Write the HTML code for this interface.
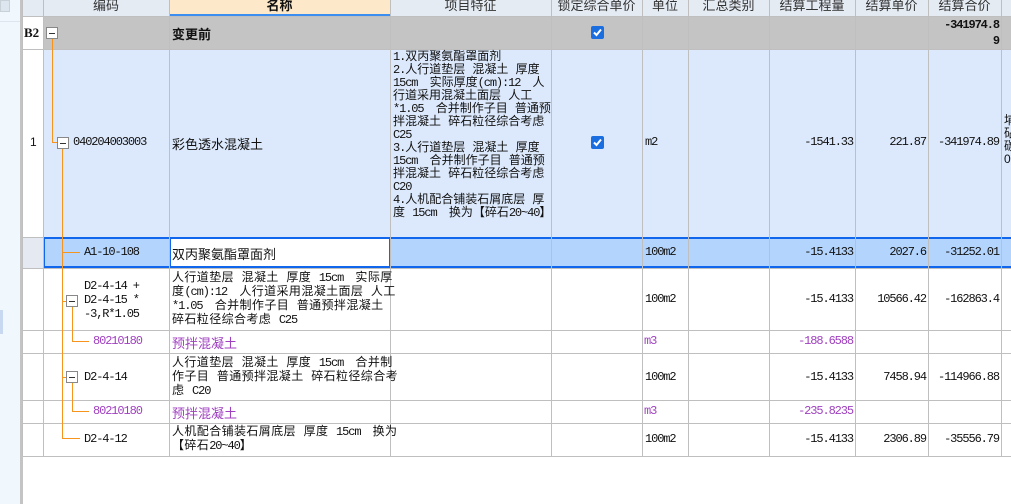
<!DOCTYPE html><html><head><meta charset="utf-8"><style>
body{margin:0;width:1011px;height:504px;overflow:hidden;background:#fff;position:relative;font-family:"Liberation Sans","Noto Sans CJK SC",sans-serif;font-size:12px;color:#111}
div{position:absolute;box-sizing:border-box}
.m{font-family:"Liberation Mono","Noto Sans CJK SC",monospace;font-size:12px;letter-spacing:-1.1px}
.t{white-space:nowrap}
.pre{white-space:pre;font-family:"Liberation Mono","Noto Sans CJK SC",monospace;font-size:12px;letter-spacing:0.4px}
.pre i{font-style:normal;letter-spacing:-1.1px}
.vl{width:1px;background:#bfbfbf}
.hl{height:1px;background:#bfbfbf}
.o{background:#f7941d}
.box{width:12px;height:12px;border:1px solid #888;background:#fff}
.box:after{content:"";position:absolute;left:2px;top:5px;width:6px;height:1px;background:#333}
.cb{width:13px;height:13px;border-radius:2px;background:#1a6ee0}
.p{color:#a040c0}
.r{text-align:right}
</style></head><body>
<div style="left:0;top:0;width:20px;height:504px;background:#f0f8fd"></div>
<div style="left:0;top:0;width:10px;height:12px;background:#dde6ee;border:1px solid #c8d0d8"></div>
<div style="left:0;top:310px;width:3px;height:24px;background:#c8d8f0"></div>
<div style="left:0;top:21px;width:20px;height:1px;background:#dde6ee"></div>
<div style="left:20px;top:0;width:3px;height:504px;background:#c4c4c4"></div>
<div style="left:23px;top:0;width:988px;height:16px;background:#e4ebf3"></div>
<div style="left:169px;top:0;width:221px;height:16px;background:#fde9c9;border-bottom:2px solid #3c8ff0"></div>
<div style="left:43px;top:16px;width:968px;height:33px;background:#c4c4c4"></div>
<div style="left:43px;top:49px;width:968px;height:188px;background:#dce9fc"></div>
<div style="left:23px;top:237px;width:20px;height:31px;background:#e4e9f2"></div>
<div style="left:43px;top:237px;width:968px;height:31px;background:#b3d4fc;border-top:2px solid #1166ee;border-bottom:2px solid #1166ee"></div>
<div style="left:43px;top:237px;width:128px;height:31px;border:2px solid #1166ee;border-right:none"></div>
<div style="left:169px;top:237px;width:222px;height:31px;background:#fff;border:2px solid #1166ee"></div>
<div class="vl" style="left:43px;top:0;height:456px"></div>
<div class="vl" style="left:169px;top:0;height:456px"></div>
<div class="vl" style="left:390px;top:0;height:456px"></div>
<div class="vl" style="left:551px;top:0;height:456px"></div>
<div class="vl" style="left:642px;top:0;height:456px"></div>
<div class="vl" style="left:688px;top:0;height:456px"></div>
<div class="vl" style="left:769px;top:0;height:456px"></div>
<div class="vl" style="left:855px;top:0;height:456px"></div>
<div class="vl" style="left:928px;top:0;height:456px"></div>
<div class="vl" style="left:1001px;top:0;height:456px"></div>
<div class="vl" style="left:22px;top:0;height:456px"></div>
<div class="hl" style="left:23px;top:16px;width:988px"></div>
<div class="hl" style="left:23px;top:49px;width:988px"></div>
<div class="hl" style="left:23px;top:268px;width:988px"></div>
<div class="hl" style="left:23px;top:330px;width:988px"></div>
<div class="hl" style="left:23px;top:353px;width:988px"></div>
<div class="hl" style="left:23px;top:400px;width:988px"></div>
<div class="hl" style="left:23px;top:423px;width:988px"></div>
<div class="hl" style="left:23px;top:456px;width:988px"></div>
<div style="left:23px;top:237px;width:20px;height:1px;background:#bfbfbf"></div>
<div class="t" style="left:43px;top:-5px;width:126px;text-align:center;font-size:13px;color:#333">编码</div>
<div class="t" style="left:169px;top:-5px;width:221px;text-align:center;font-size:13px;font-weight:bold">名称</div>
<div class="t" style="left:390px;top:-5px;width:161px;text-align:center;font-size:13px;color:#333">项目特征</div>
<div class="t" style="left:551px;top:-5px;width:91px;text-align:center;font-size:13px;color:#333">锁定综合单价</div>
<div class="t" style="left:642px;top:-5px;width:46px;text-align:center;font-size:13px;color:#333">单位</div>
<div class="t" style="left:688px;top:-5px;width:81px;text-align:center;font-size:13px;color:#333">汇总类别</div>
<div class="t" style="left:769px;top:-5px;width:86px;text-align:center;font-size:13px;color:#333">结算工程量</div>
<div class="t" style="left:855px;top:-5px;width:73px;text-align:center;font-size:13px;color:#333">结算单价</div>
<div class="t" style="left:928px;top:-5px;width:73px;text-align:center;font-size:13px;color:#333">结算合价</div>
<div class="o" style="left:52px;top:38px;width:1px;height:105px"></div>
<div class="o" style="left:52px;top:142px;width:5px;height:1px"></div>
<div class="o" style="left:62px;top:148px;width:1px;height:291px"></div>
<div class="o" style="left:62px;top:252px;width:18px;height:1px"></div>
<div class="o" style="left:62px;top:301px;width:4px;height:1px"></div>
<div class="o" style="left:62px;top:377px;width:4px;height:1px"></div>
<div class="o" style="left:62px;top:438px;width:18px;height:1px"></div>
<div class="o" style="left:72px;top:307px;width:1px;height:35px"></div>
<div class="o" style="left:72px;top:341px;width:17px;height:1px"></div>
<div class="o" style="left:72px;top:383px;width:1px;height:29px"></div>
<div class="o" style="left:72px;top:411px;width:17px;height:1px"></div>
<div class="box" style="left:46px;top:27px"></div>
<div class="box" style="left:57px;top:137px"></div>
<div class="box" style="left:66px;top:295px"></div>
<div class="box" style="left:66px;top:371px"></div>
<div class="t" style="left:24px;top:25px;font-weight:bold;font-family:'Liberation Serif',serif;font-size:13px">B2</div>
<div class="t" style="left:172px;top:24px;font-weight:bold;font-size:13px">变更前</div>
<div class="cb" style="left:591px;top:26px"><svg width="13" height="13"><path d="M3 6.5L5.5 9L10 3.5" stroke="#fff" stroke-width="2" fill="none"/></svg></div>
<div class="m r" style="left:928px;top:17px;width:71px;font-weight:bold;line-height:16px;white-space:nowrap">-341974.8<br>9</div>
<div class="t" style="left:30px;top:135px">1</div>
<div class="t m" style="left:73px;top:135px">040204003003</div>
<div class="t" style="left:172px;top:134px;font-size:13px">彩色透水混凝土</div>
<div class="pre" style="left:393px;top:51px;line-height:13px;letter-spacing:0"><i>1.</i>双丙聚氨酯罩面剂
<i>2.</i>人行道垫层 混凝土 厚度
<i>15cm  </i>实际厚度<i>(cm):12  </i>人
行道采用混凝土面层 人工
<i>*1.05  </i>合并制作子目 普通预
拌混凝土 碎石粒径综合考虑
<i>C25</i>
<i>3.</i>人行道垫层 混凝土 厚度
<i>15cm  </i>合并制作子目 普通预
拌混凝土 碎石粒径综合考虑
<i>C20</i>
<i>4.</i>人机配合铺装石屑底层 厚
度 <i>15cm  </i>换为【碎石<i>20~40</i>】</div>
<div class="cb" style="left:591px;top:136px"><svg width="13" height="13"><path d="M3 6.5L5.5 9L10 3.5" stroke="#fff" stroke-width="2" fill="none"/></svg></div>
<div class="t m" style="left:645px;top:135px">m2</div>
<div class="t m r" style="left:769px;top:135px;width:84px">-1541.33</div>
<div class="t m r" style="left:855px;top:135px;width:71px">221.87</div>
<div class="t m r" style="left:928px;top:135px;width:71px">-341974.89</div>
<div style="left:1004px;top:114px;width:8px;line-height:13px;overflow:hidden;font-size:12px">埔<br>砧<br>碳<br>0</div>
<div class="t m" style="left:84px;top:245px">A1-10-108</div>
<div class="t" style="left:172px;top:244px;font-size:13px">双丙聚氨酯罩面剂</div>
<div class="t m" style="left:645px;top:245px">100m2</div>
<div class="t m r" style="left:769px;top:245px;width:84px">-15.4133</div>
<div class="t m r" style="left:855px;top:245px;width:71px">2027.6</div>
<div class="t m r" style="left:928px;top:245px;width:71px">-31252.01</div>
<div class="m" style="left:84px;top:279px;line-height:14px;white-space:nowrap">D2-4-14 +<br>D2-4-15 *<br>-3,R*1.05</div>
<div class="pre" style="left:172px;top:271px;line-height:14px">人行道垫层 混凝土 厚度 <i>15cm  </i>实际厚
度<i>(cm):12  </i>人行道采用混凝土面层 人工
<i>*1.05  </i>合并制作子目 普通预拌混凝土
碎石粒径综合考虑 <i>C25</i></div>
<div class="t m" style="left:645px;top:292px">100m2</div>
<div class="t m r" style="left:769px;top:292px;width:84px">-15.4133</div>
<div class="t m r" style="left:855px;top:292px;width:71px">10566.42</div>
<div class="t m r" style="left:928px;top:292px;width:71px">-162863.4</div>
<div class="t m p" style="left:93px;top:334px">80210180</div>
<div class="t p" style="left:172px;top:333px;font-size:13px">预拌混凝土</div>
<div class="t m p" style="left:644px;top:334px">m3</div>
<div class="t m r p" style="left:769px;top:334px;width:84px">-188.6588</div>
<div class="t m" style="left:84px;top:370px">D2-4-14</div>
<div class="pre" style="left:172px;top:356px;line-height:14px">人行道垫层 混凝土 厚度 <i>15cm  </i>合并制
作子目 普通预拌混凝土 碎石粒径综合考
虑 <i>C20</i></div>
<div class="t m" style="left:645px;top:370px">100m2</div>
<div class="t m r" style="left:769px;top:370px;width:84px">-15.4133</div>
<div class="t m r" style="left:855px;top:370px;width:71px">7458.94</div>
<div class="t m r" style="left:928px;top:370px;width:71px">-114966.88</div>
<div class="t m p" style="left:93px;top:404px">80210180</div>
<div class="t p" style="left:172px;top:403px;font-size:13px">预拌混凝土</div>
<div class="t m p" style="left:644px;top:404px">m3</div>
<div class="t m r p" style="left:769px;top:404px;width:84px">-235.8235</div>
<div class="t m" style="left:84px;top:432px">D2-4-12</div>
<div class="pre" style="left:172px;top:425px;line-height:14px">人机配合铺装石屑底层 厚度 <i>15cm  </i>换为
【碎石<i>20~40</i>】</div>
<div class="t m" style="left:645px;top:432px">100m2</div>
<div class="t m r" style="left:769px;top:432px;width:84px">-15.4133</div>
<div class="t m r" style="left:855px;top:432px;width:71px">2306.89</div>
<div class="t m r" style="left:928px;top:432px;width:71px">-35556.79</div>
</body></html>
